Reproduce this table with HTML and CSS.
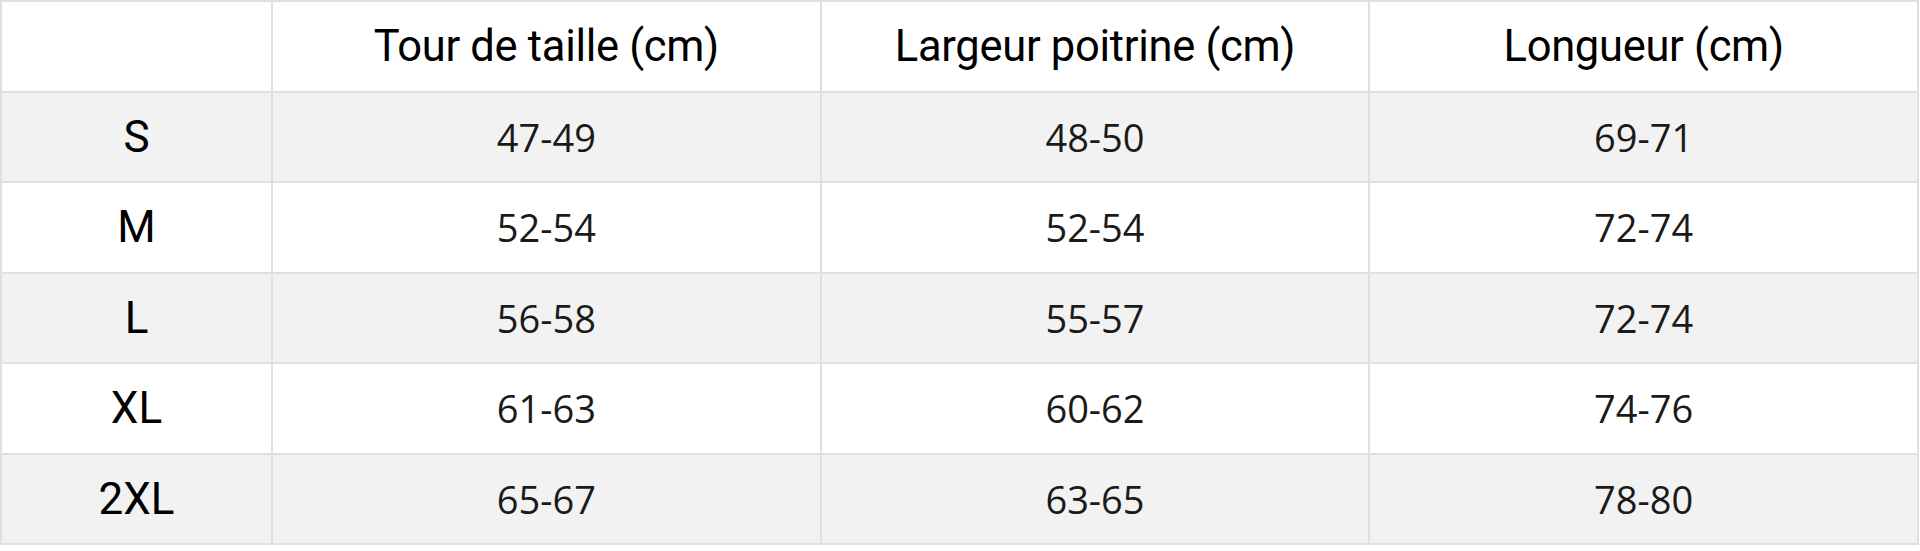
FILE: index.html
```html
<!DOCTYPE html>
<html lang="fr">
<head>
<meta charset="utf-8">
<title>Guide des tailles</title>
<link rel="stylesheet" href="styles.css">
</head>
<body>
<table class="size-table">
  <colgroup>
    <col class="col-size">
    <col class="col-val">
    <col class="col-val">
    <col class="col-val">
  </colgroup>
  <thead>
    <tr>
      <th></th>
      <th>Tour de taille (cm)</th>
      <th>Largeur poitrine (cm)</th>
      <th>Longueur (cm)</th>
    </tr>
  </thead>
  <tbody>
    <tr class="alt"><th>S</th><td>47-49</td><td>48-50</td><td>69-71</td></tr>
    <tr><th>M</th><td>52-54</td><td>52-54</td><td>72-74</td></tr>
    <tr class="alt"><th>L</th><td>56-58</td><td>55-57</td><td>72-74</td></tr>
    <tr><th>XL</th><td>61-63</td><td>60-62</td><td>74-76</td></tr>
    <tr class="alt"><th>2XL</th><td>65-67</td><td>63-65</td><td>78-80</td></tr>
  </tbody>
</table>
</body>
</html>
```
FILE: styles.css
```css
html, body {
  margin: 0;
  padding: 0;
  background: #ffffff;
}

.size-table {
  width: 1919px;
  border-collapse: collapse;
  table-layout: fixed;
  color: #111111;
}

.col-size { width: 271px; }

.size-table th,
.size-table td {
  border: 2px solid #e0e0e0;
  text-align: center;
  vertical-align: middle;
  padding: 0;
  height: 88.5px;
}

.size-table thead th {
  font-family: "Roboto", "Liberation Sans", sans-serif;
  font-size: 43.5px;
  font-weight: 400;
  letter-spacing: -0.3px;
  color: #000000;
}

.size-table tbody th {
  font-family: "Roboto", "Liberation Sans", sans-serif;
  font-size: 44px;
  font-weight: 400;
  color: #000000;
}

.size-table td {
  font-family: "Open Sans", "Noto Sans", sans-serif;
  font-size: 38px;
  font-weight: 400;
  color: #1a1a1a;
}

.size-table tr.alt th,
.size-table tr.alt td {
  background: #f2f2f2;
}
```
